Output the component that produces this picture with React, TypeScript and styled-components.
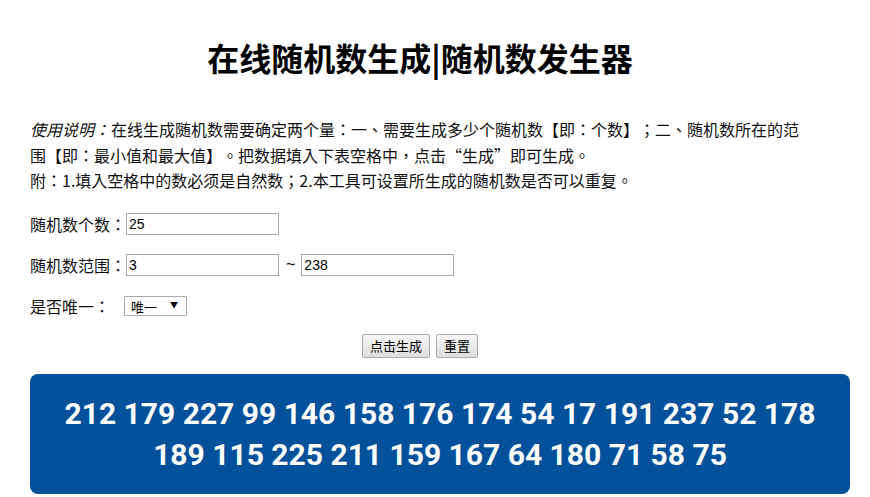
import React from 'react';
import styled, {createGlobalStyle} from 'styled-components';

const numbers = [
  212, 179, 227, 99, 146, 158, 176, 174, 54, 17, 191, 237, 52, 178,
  189, 115, 225, 211, 159, 167, 64, 180, 71, 58, 75,
];

export default function App() {
  return (
    <Page>
      <GlobalStyle/>
      <Content>
        <Title>在线随机数生成|随机数发生器</Title>
        <Intro>
          <em>使用说明：</em>在线生成随机数需要确定两个量：一、需要生成多少个随机数【即：个数】；二、随机数所在的范围【即：最小值和最大值】。把数据填入下表空格中，点击“生成”即可生成。
          <br/>
          附：1.填入空格中的数必须是自然数；2.本工具可设置所生成的随机数是否可以重复。
        </Intro>
        <Form>
          <Row>
            <Label>随机数个数：</Label>
            <Input defaultValue='25'/>
          </Row>
          <Row>
            <Label>随机数范围：</Label>
            <Input defaultValue='3'/>
            <Tilde>~</Tilde>
            <Input defaultValue='238'/>
          </Row>
          <Row>
            <Label>是否唯一：</Label>
            <SelectWrap>
              <Select defaultValue='1'>
                <option value='1'>唯一</option>
                <option value='0'>不唯一</option>
              </Select>
              <Arrow>▼</Arrow>
            </SelectWrap>
          </Row>
          <Buttons>
            <Button>点击生成</Button>
            <Button>重置</Button>
          </Buttons>
        </Form>
      </Content>
      <Result>{numbers.join(' ')}</Result>
    </Page>
  );
}

const GlobalStyle = createGlobalStyle`
  body {
    margin: 0;
    background: #fff;
    color: #000;
    font-family: "Noto Sans CJK TC", "Noto Sans CJK SC", "Liberation Sans", sans-serif;
    text-spacing-trim: space-all;
  }
`;

const Page = styled.div`
  width: 820px;
  padding: 37px 0 0 30px;
`;

const Content = styled.div`
  width: 780px;
`;

const Title = styled.h1`
  margin: 0;
  font-family: "Noto Sans CJK SC", sans-serif;
  font-size: 32px;
  line-height: 40px;
  font-weight: bold;
  text-align: center;
`;

const Intro = styled.p`
  width: 770px;
  margin: 40px 0 0;
  font-size: 16px;
  line-height: 25.5px;
  color: #111;

  & em {
    font-style: italic;
    padding-right: 1px;
  }
`;

const Form = styled.div`
  display: flex;
  flex-direction: column;
  margin-top: 19px;
`;

const Row = styled.div`
  display: flex;
  align-items: center;
  height: 22px;
  margin-bottom: 19px;
`;

const Label = styled.span`
  font-size: 16px;
  line-height: 22px;
  white-space: nowrap;
  color: #111;
`;

const Input = styled.input`
  box-sizing: border-box;
  width: 153px;
  height: 22px;
  margin: 0;
  padding: 1px 2px;
  border: 1px solid #a9a9a9;
  font-family: "Liberation Sans", Arial, sans-serif;
  font-size: 14px;
  color: #000;
  outline: none;
`;

const Tilde = styled.span`
  margin: 0 6px 0 7px;
  font-family: "Liberation Sans", Arial, sans-serif;
  font-size: 16px;
`;

const SelectWrap = styled.div`
  position: relative;
  margin-left: 14px;
`;

const Select = styled.select`
  appearance: none;
  display: block;
  box-sizing: border-box;
  width: 63px;
  height: 20px;
  margin: 0;
  padding: 0 0 0 6px;
  border: 1px solid #a9a9a9;
  border-radius: 1px;
  background: #fff;
  font-family: "Noto Sans CJK SC", sans-serif;
  font-size: 13px;
  color: #000;
  outline: none;
`;

const Arrow = styled.span`
  position: absolute;
  right: 9px;
  top: 3px;
  font-size: 8px;
  line-height: 12px;
  pointer-events: none;
`;

const Buttons = styled.div`
  display: flex;
  justify-content: center;
  gap: 6px;
  margin-top: -2px;
`;

const Button = styled.button`
  box-sizing: border-box;
  height: 24px;
  margin: 0;
  padding: 0 7px;
  border: 1px solid #adadad;
  border-radius: 2px;
  background: linear-gradient(#f6f6f6, #dedede);
  font-family: "Noto Sans CJK SC", sans-serif;
  font-size: 13px;
  color: #000;
`;

const Result = styled.div`
  box-sizing: border-box;
  width: 820px;
  margin-top: 16px;
  padding: 19px 20px 19px;
  border-radius: 8px;
  background: #03519a;
  color: #fff;
  text-align: center;
  font-family: Roboto, "DejaVu Sans", sans-serif;
  font-weight: bold;
  font-size: 30px;
  line-height: 41px;
`;
